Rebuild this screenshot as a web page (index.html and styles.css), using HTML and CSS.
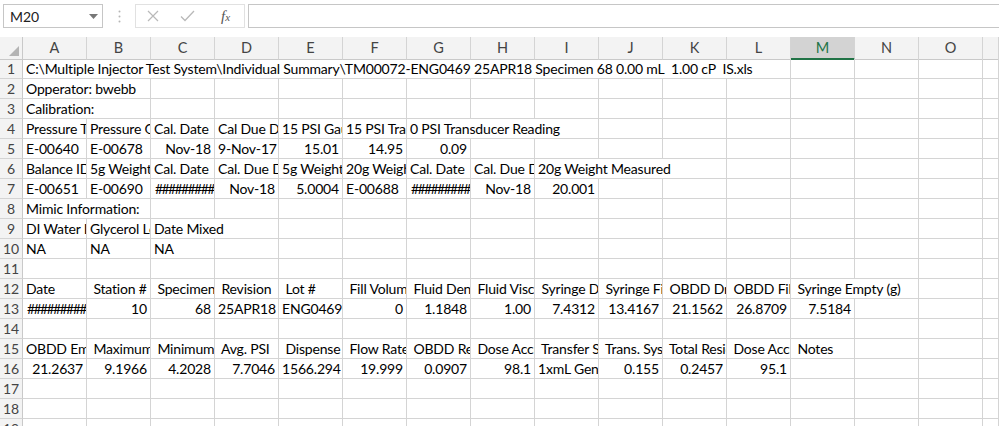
FILE: index.html
```html
<!DOCTYPE html>
<html>
<head>
<meta charset="utf-8">
<link rel="stylesheet" href="styles.css">
</head>
<body>
<div class="topbar">
  <div class="namebox"><span class="nb-text">M20</span>
    <svg class="nb-arrow" width="9" height="5" viewBox="0 0 9 5"><path d="M0 0 L9 0 L4.5 5 Z" fill="#777"/></svg>
  </div>
  <div class="grip">
    <svg width="3" height="13" viewBox="0 0 3 13"><circle cx="1.5" cy="1.5" r="1" fill="#b5b5b5"/><circle cx="1.5" cy="6.5" r="1" fill="#b5b5b5"/><circle cx="1.5" cy="11.5" r="1" fill="#b5b5b5"/></svg>
  </div>
  <div class="fxbox">
    <svg class="ico" width="12" height="12" viewBox="0 0 12 12"><path d="M1 1 L11 11 M11 1 L1 11" stroke="#b9b9b9" stroke-width="1.2" fill="none"/></svg>
    <svg class="ico" width="15" height="12" viewBox="0 0 15 12"><path d="M1 6.5 L5 10.5 L14 1" stroke="#b9b9b9" stroke-width="1.3" fill="none"/></svg>
    <span class="fx"><i>f</i><span class="fx-x">x</span></span>
  </div>
  <div class="formula"></div>
</div>

<div class="sheet">
  <div class="g hdr">
    <div class="corner"><svg class="tri" width="10" height="10" viewBox="0 0 10 10"><path d="M10 0 L10 10 L0 10 Z" fill="#b4b4b4"/></svg></div>
    <div class="ch">A</div><div class="ch">B</div><div class="ch">C</div><div class="ch">D</div><div class="ch">E</div><div class="ch">F</div><div class="ch">G</div><div class="ch">H</div><div class="ch">I</div><div class="ch">J</div><div class="ch">K</div><div class="ch">L</div><div class="ch sel">M</div><div class="ch">N</div><div class="ch">O</div><div class="ch"></div>
  </div>

  <div class="g"><div class="rh">1</div><div class="c s12">C:\Multiple Injector Test System\Individual Summary\TM00072-ENG0469 25APR18 Specimen 68 0.00 mL  1.00 cP  IS.xls</div><div class="c"></div><div class="c"></div><div class="c"></div><div class="c"></div></div>

  <div class="g"><div class="rh">2</div><div class="c s2">Opperator: bwebb</div><div class="c"></div><div class="c"></div><div class="c"></div><div class="c"></div><div class="c"></div><div class="c"></div><div class="c"></div><div class="c"></div><div class="c"></div><div class="c"></div><div class="c"></div><div class="c"></div><div class="c"></div><div class="c"></div></div>

  <div class="g"><div class="rh">3</div><div class="c s2">Calibration:</div><div class="c"></div><div class="c"></div><div class="c"></div><div class="c"></div><div class="c"></div><div class="c"></div><div class="c"></div><div class="c"></div><div class="c"></div><div class="c"></div><div class="c"></div><div class="c"></div><div class="c"></div><div class="c"></div></div>

  <div class="g"><div class="rh">4</div><div class="c">Pressure Transducer ID</div><div class="c">Pressure Gauge ID</div><div class="c">Cal. Date</div><div class="c">Cal Due Date</div><div class="c">15 PSI Gauge Reading</div><div class="c">15 PSI Transducer Reading</div><div class="c s3">0 PSI Transducer Reading</div><div class="c"></div><div class="c"></div><div class="c"></div><div class="c"></div><div class="c"></div><div class="c"></div><div class="c"></div></div>

  <div class="g"><div class="rh">5</div><div class="c">E-00640</div><div class="c">E-00678</div><div class="c r">Nov-18</div><div class="c r">9-Nov-17</div><div class="c r">15.01</div><div class="c r">14.95</div><div class="c r">0.09</div><div class="c"></div><div class="c"></div><div class="c"></div><div class="c"></div><div class="c"></div><div class="c"></div><div class="c"></div><div class="c"></div><div class="c"></div></div>

  <div class="g"><div class="rh">6</div><div class="c">Balance ID</div><div class="c">5g Weight ID</div><div class="c">Cal. Date</div><div class="c">Cal. Due Date</div><div class="c">5g Weight Measured</div><div class="c">20g Weight ID</div><div class="c">Cal. Date</div><div class="c">Cal. Due Date</div><div class="c s3">20g Weight Measured</div><div class="c"></div><div class="c"></div><div class="c"></div><div class="c"></div><div class="c"></div></div>

  <div class="g"><div class="rh">7</div><div class="c">E-00651</div><div class="c">E-00690</div><div class="c hash">#########</div><div class="c r">Nov-18</div><div class="c r">5.0004</div><div class="c">E-00688</div><div class="c hash">#########</div><div class="c r">Nov-18</div><div class="c r">20.001</div><div class="c"></div><div class="c"></div><div class="c"></div><div class="c"></div><div class="c"></div><div class="c"></div><div class="c"></div></div>

  <div class="g"><div class="rh">8</div><div class="c s2">Mimic Information:</div><div class="c"></div><div class="c"></div><div class="c"></div><div class="c"></div><div class="c"></div><div class="c"></div><div class="c"></div><div class="c"></div><div class="c"></div><div class="c"></div><div class="c"></div><div class="c"></div><div class="c"></div><div class="c"></div></div>

  <div class="g"><div class="rh">9</div><div class="c">DI Water Lot</div><div class="c">Glycerol Lot</div><div class="c s2">Date Mixed</div><div class="c"></div><div class="c"></div><div class="c"></div><div class="c"></div><div class="c"></div><div class="c"></div><div class="c"></div><div class="c"></div><div class="c"></div><div class="c"></div><div class="c"></div><div class="c"></div></div>

  <div class="g"><div class="rh">10</div><div class="c">NA</div><div class="c">NA</div><div class="c">NA</div><div class="c"></div><div class="c"></div><div class="c"></div><div class="c"></div><div class="c"></div><div class="c"></div><div class="c"></div><div class="c"></div><div class="c"></div><div class="c"></div><div class="c"></div><div class="c"></div><div class="c"></div></div>

  <div class="g"><div class="rh">11</div><div class="c"></div><div class="c"></div><div class="c"></div><div class="c"></div><div class="c"></div><div class="c"></div><div class="c"></div><div class="c"></div><div class="c"></div><div class="c"></div><div class="c"></div><div class="c"></div><div class="c"></div><div class="c"></div><div class="c"></div><div class="c"></div></div>

  <div class="g"><div class="rh">12</div><div class="c">Date</div><div class="c"> Station #</div><div class="c"> Specimen</div><div class="c"> Revision</div><div class="c"> Lot #</div><div class="c"> Fill Volume (mL)</div><div class="c"> Fluid Density</div><div class="c"> Fluid Viscosity</div><div class="c"> Syringe Dry</div><div class="c"> Syringe Fill</div><div class="c"> OBDD Dry (g)</div><div class="c"> OBDD Fill</div><div class="c s2"> Syringe Empty (g)</div><div class="c"></div><div class="c"></div></div>

  <div class="g"><div class="rh">13</div><div class="c hash">#########</div><div class="c r">10</div><div class="c r">68</div><div class="c">25APR18</div><div class="c">ENG0469</div><div class="c r">0</div><div class="c r">1.1848</div><div class="c r">1.00</div><div class="c r">7.4312</div><div class="c r">13.4167</div><div class="c r">21.1562</div><div class="c r">26.8709</div><div class="c r">7.5184</div><div class="c"></div><div class="c"></div><div class="c"></div></div>

  <div class="g"><div class="rh">14</div><div class="c"></div><div class="c"></div><div class="c"></div><div class="c"></div><div class="c"></div><div class="c"></div><div class="c"></div><div class="c"></div><div class="c"></div><div class="c"></div><div class="c"></div><div class="c"></div><div class="c"></div><div class="c"></div><div class="c"></div><div class="c"></div></div>

  <div class="g"><div class="rh">15</div><div class="c">OBDD Empty</div><div class="c"> Maximum PSI</div><div class="c"> Minimum PSI</div><div class="c"> Avg. PSI</div><div class="c"> Dispense Time</div><div class="c"> Flow Rate</div><div class="c"> OBDD Residual</div><div class="c"> Dose Accuracy</div><div class="c"> Transfer System</div><div class="c"> Trans. System</div><div class="c"> Total Residual</div><div class="c"> Dose Accuracy</div><div class="c"> Notes</div><div class="c"></div><div class="c"></div><div class="c"></div></div>

  <div class="g"><div class="rh">16</div><div class="c r">21.2637</div><div class="c r">9.1966</div><div class="c r">4.2028</div><div class="c r">7.7046</div><div class="c r">1566.294</div><div class="c r">19.999</div><div class="c r">0.0907</div><div class="c r">98.1</div><div class="c">1xmL Generic</div><div class="c r">0.155</div><div class="c r">0.2457</div><div class="c r">95.1</div><div class="c"></div><div class="c"></div><div class="c"></div><div class="c"></div></div>

  <div class="g"><div class="rh">17</div><div class="c"></div><div class="c"></div><div class="c"></div><div class="c"></div><div class="c"></div><div class="c"></div><div class="c"></div><div class="c"></div><div class="c"></div><div class="c"></div><div class="c"></div><div class="c"></div><div class="c"></div><div class="c"></div><div class="c"></div><div class="c"></div></div>

  <div class="g"><div class="rh">18</div><div class="c"></div><div class="c"></div><div class="c"></div><div class="c"></div><div class="c"></div><div class="c"></div><div class="c"></div><div class="c"></div><div class="c"></div><div class="c"></div><div class="c"></div><div class="c"></div><div class="c"></div><div class="c"></div><div class="c"></div><div class="c"></div></div>

  <div class="g"><div class="rh">19</div><div class="c"></div><div class="c"></div><div class="c"></div><div class="c"></div><div class="c"></div><div class="c"></div><div class="c"></div><div class="c"></div><div class="c"></div><div class="c"></div><div class="c"></div><div class="c"></div><div class="c"></div><div class="c"></div><div class="c"></div><div class="c"></div></div>
</div>
</body>
</html>
```

FILE: styles.css
```css
* { box-sizing: border-box; }
html, body { margin: 0; padding: 0; height: 426px; overflow: hidden; background: #ffffff; }
body { font-family: "Lato", "Open Sans", sans-serif; font-size: 14px; letter-spacing: -0.18px; color: #000; }

.topbar { height: 37px; display: flex; align-items: flex-start; padding: 4px 0 0 3px; background: #ffffff; }
.namebox { width: 100px; height: 24px; border: 1px solid #c6c6c6; display: flex; align-items: center; justify-content: space-between; padding: 0 4px 0 6px; background: #fff; }
.nb-text { font-size: 14px; color: #222; letter-spacing: 0; }
.grip { width: 32px; height: 24px; display: flex; align-items: center; justify-content: center; }
.fxbox { width: 110px; height: 24px; border: 1px solid #e1e1e1; display: flex; align-items: center; padding-left: 11px; gap: 21px; background: #fff; }
.fx { font-family: "Liberation Serif", serif; font-size: 15px; color: #555; font-style: italic; margin-left: 5px; letter-spacing: 0; }
.fx-x { font-size: 11px; }
.formula { flex: 1; height: 24px; border: 1px solid #c6c6c6; border-right: none; margin-left: 3px; background: #fff; }

.g { display: grid; grid-template-columns: 23px repeat(15, 64px) 1fr; height: 20px; }
.hdr { height: 22px; }

.corner { background: #f3f3f3; border-right: 1px solid #c9c9c9; border-bottom: 1px solid #c9c9c9; position: relative; }
.tri { position: absolute; right: 3px; bottom: 3px; }
.ch { background: #f3f3f3; border-right: 1px solid #d4d4d4; border-bottom: 1px solid #c9c9c9; text-align: center; color: #444; line-height: 21px; font-size: 14.5px; letter-spacing: 0; }
.ch.sel { background: #d3d3d3; color: #217346; border-bottom: 2px solid #217346; }

.rh { background: #f3f3f3; border-right: 1px solid #c9c9c9; border-bottom: 1px solid #d4d4d4; text-align: center; color: #444; line-height: 19px; font-size: 14px; letter-spacing: 0; }

.c { border-right: 1px solid #d4d4d4; border-bottom: 1px solid #d4d4d4; padding: 0 3px; white-space: pre; overflow: hidden; line-height: 19px; }
.r { text-align: right; }
.hash { padding: 0 0 0 4px; letter-spacing: -1.6px; }
.s2 { grid-column: span 2; }
.s3 { grid-column: span 3; }
.s12 { grid-column: span 12; }
```
